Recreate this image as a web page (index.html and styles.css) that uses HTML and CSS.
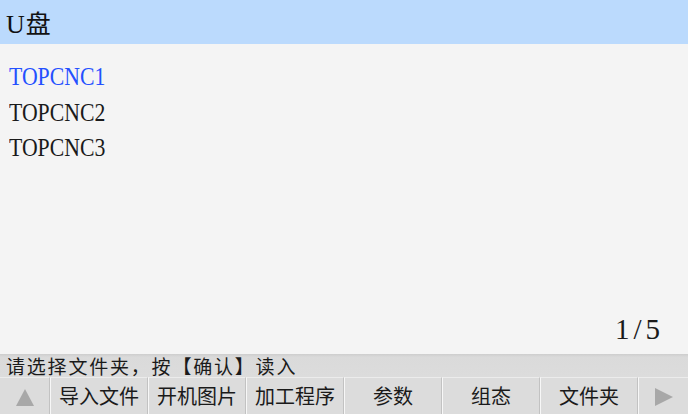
FILE: index.html
```html
<!DOCTYPE html>
<html lang="zh">
<head>
<meta charset="utf-8">
<title>U盘</title>
<link rel="stylesheet" href="styles.css">
</head>
<body>
<div class="screen">
  <header class="title"><span class="title-u">U</span><span class="title-cn">盘</span></header>
  <main class="content">
    <ul class="list">
      <li class="item active"><span class="narrow">TOPCNC1</span></li>
      <li class="item"><span class="narrow">TOPCNC2</span></li>
      <li class="item"><span class="narrow">TOPCNC3</span></li>
    </ul>
    <div class="pager">1/5</div>
  </main>
  <div class="status">请选择文件夹，按【确认】读入</div>
  <nav class="buttons">
    <div class="btn arrow"><span class="tri up"></span></div>
    <div class="btn">导入文件</div>
    <div class="btn">开机图片</div>
    <div class="btn">加工程序</div>
    <div class="btn">参数</div>
    <div class="btn">组态</div>
    <div class="btn">文件夹</div>
    <div class="btn arrow"><span class="tri right"></span></div>
  </nav>
</div>
</body>
</html>
```
FILE: styles.css
```css
html, body {
  margin: 0;
  padding: 0;
}
body {
  width: 688px;
  height: 414px;
  overflow: hidden;
  background: #f4f4f4;
}
.screen {
  display: flex;
  flex-direction: column;
  width: 688px;
  height: 414px;
}
.title {
  height: 44px;
  flex: 0 0 44px;
  background: #bbdafd;
  color: #111;
  font-size: 26px;
  line-height: 44px;
  padding-left: 6px;
  box-sizing: border-box;
}
.title-u {
  font-family: "Liberation Serif", serif;
}
.title-cn {
  font-family: "Noto Sans CJK SC", sans-serif;
  font-size: 25px;
  margin-left: 1px;
}
.content {
  flex: 1 1 auto;
  display: flex;
  flex-direction: column;
  justify-content: space-between;
  background: #f4f4f4;
  padding: 15px 28px 8px 9px;
  box-sizing: border-box;
}
.list {
  list-style: none;
  margin: 0;
  padding: 0;
}
.item {
  font-family: "Liberation Serif", serif;
  font-size: 25px;
  line-height: 35.5px;
  color: #1a1a1a;
}
.item.active {
  color: #2450ff;
}
.narrow {
  display: inline-block;
  transform: scaleX(0.87);
  transform-origin: left center;
}
.pager {
  align-self: flex-end;
  font-family: "Liberation Serif", serif;
  font-size: 29px;
  letter-spacing: 4px;
  margin-right: -4px;
  line-height: 34px;
  color: #1a1a1a;
}
.status {
  flex: 0 0 23px;
  height: 23px;
  box-sizing: border-box;
  background: linear-gradient(#cdcdcd 0, #dadada 3px, #dcdcdc 100%);
  font-family: "Noto Sans CJK SC", sans-serif;
  font-size: 19px;
  letter-spacing: 1.8px;
  line-height: 22px;
  padding-top: 1px;
  color: #1a1a1a;
  padding-left: 6px;
  white-space: nowrap;
}
.buttons {
  flex: 0 0 37px;
  height: 37px;
  display: flex;
  background: #dcdcdc;
}
.btn {
  flex: 0 0 98px;
  box-sizing: border-box;
  border-top: 1px solid #ececec;
  border-left: 1px solid #f7f7f7;
  border-right: 1px solid #c2c2c2;
  display: flex;
  align-items: center;
  justify-content: center;
  font-family: "Noto Sans CJK SC", sans-serif;
  font-size: 20px;
  color: #1a1a1a;
  padding-bottom: 1px;
}
.btn.arrow {
  flex: 0 0 50px;
}
.btn.arrow:first-child {
  border-left: none;
}
.btn.arrow:last-child {
  border-right: none;
}
.tri {
  display: block;
  width: 0;
  height: 0;
}
.tri.up {
  border-left: 9px solid transparent;
  border-right: 9px solid transparent;
  border-bottom: 17px solid #a8a8a8;
  margin-top: 4px;
}
.tri.right {
  border-top: 9px solid transparent;
  border-bottom: 9px solid transparent;
  border-left: 18px solid #a8a8a8;
  margin-top: 2px;
}
```
